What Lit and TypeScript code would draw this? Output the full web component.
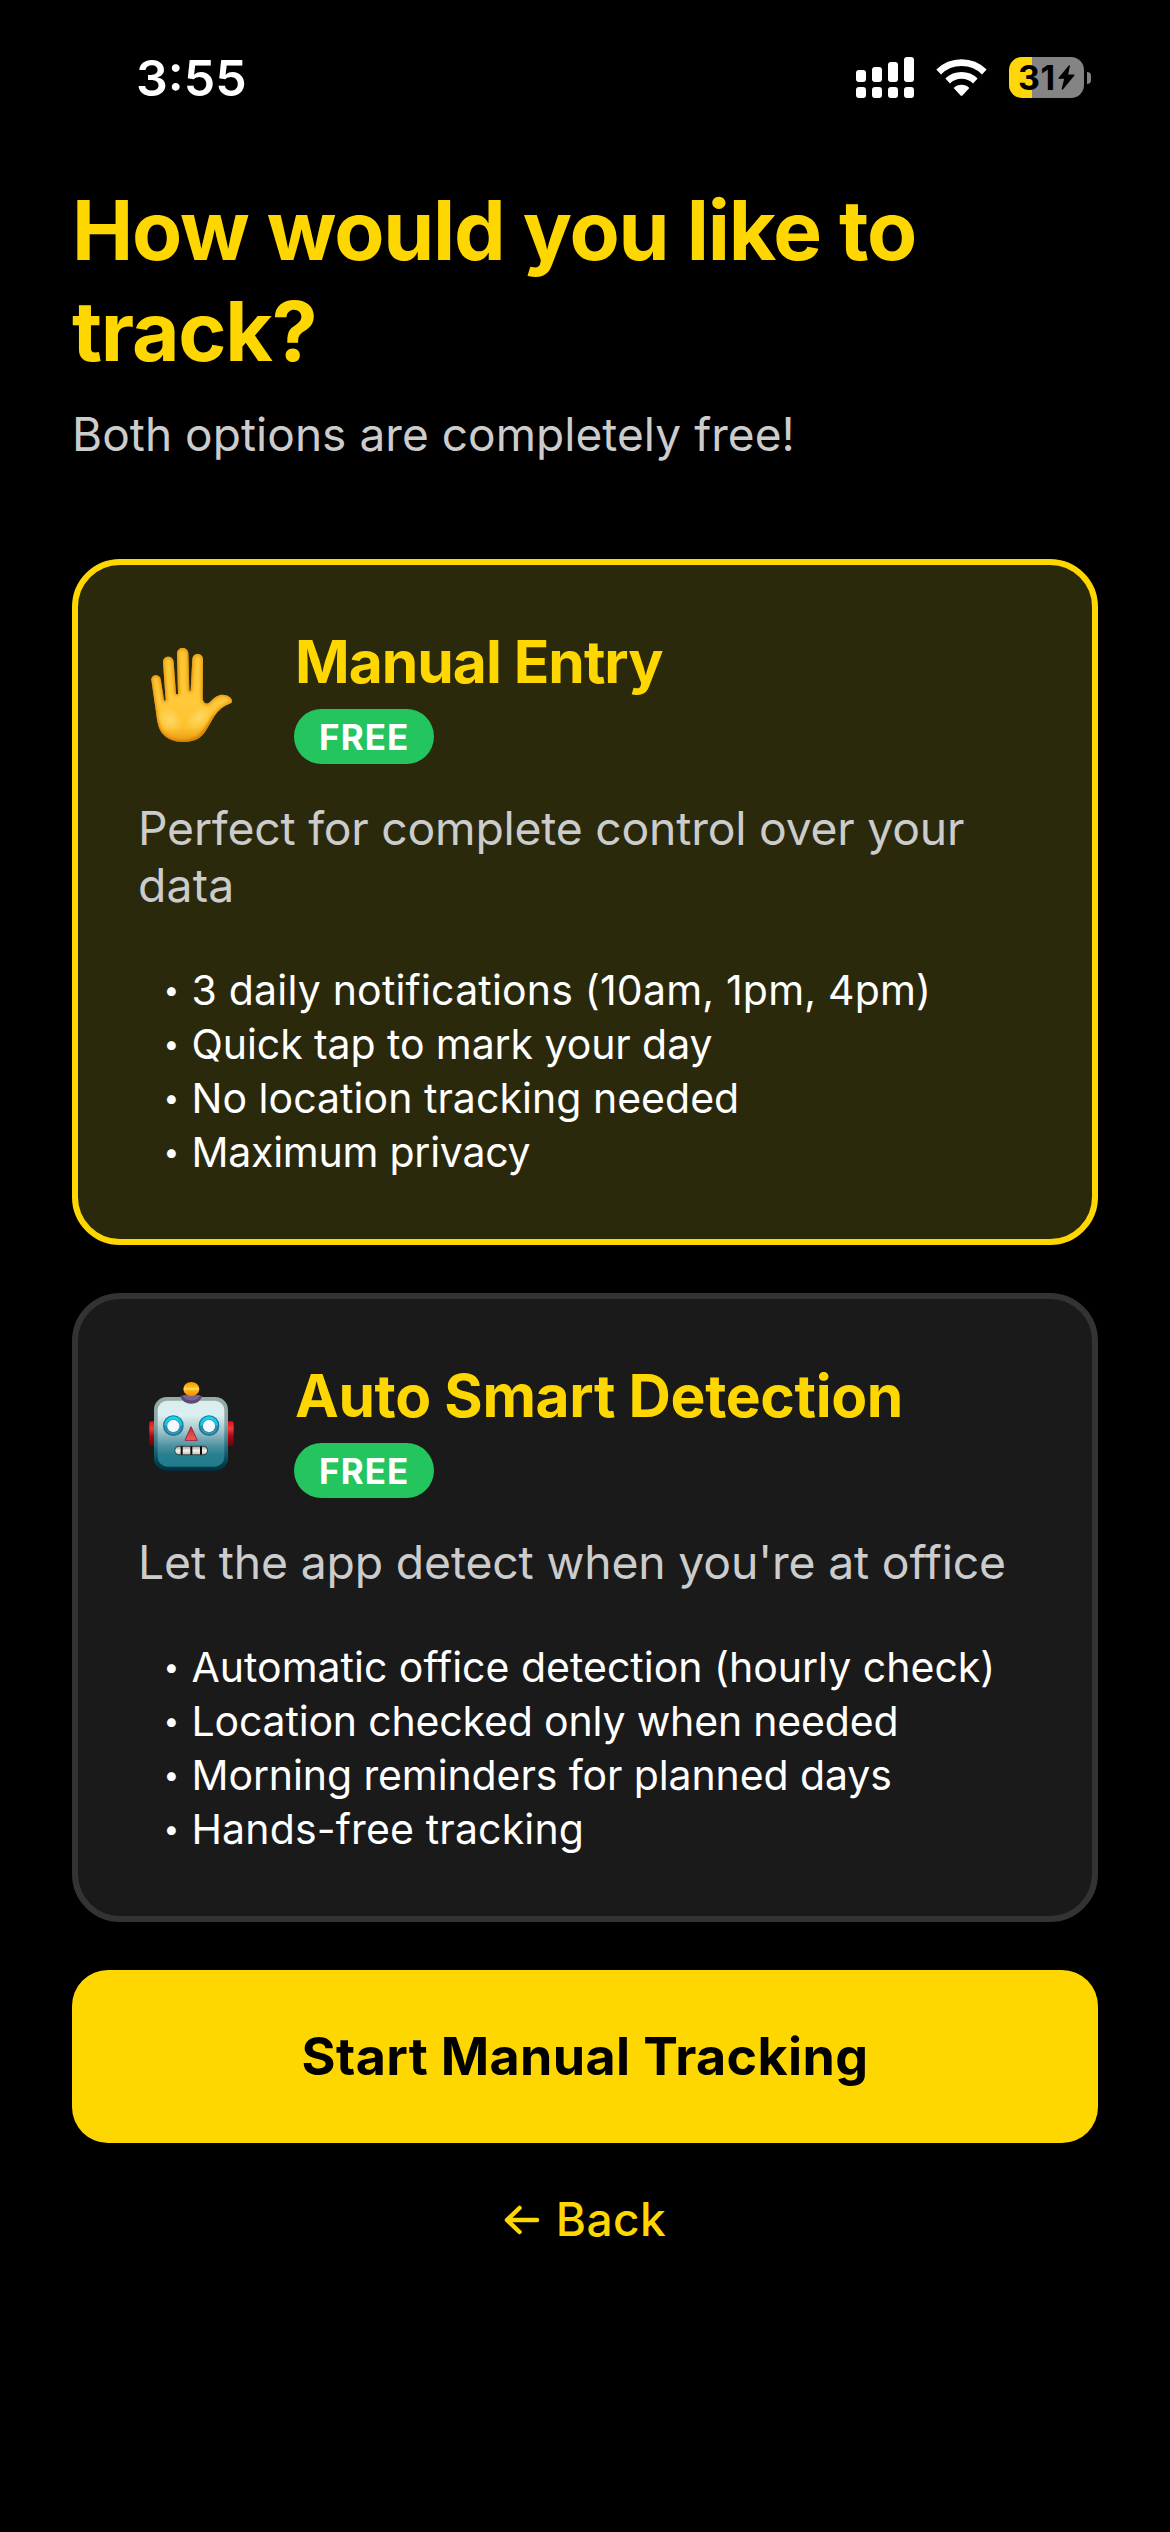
import { LitElement, html, css, svg, nothing, TemplateResult } from "lit";
import { customElement, property, state } from "lit/decorators.js";
import { classMap } from "lit/directives/class-map.js";

type Mode = "manual" | "auto";
type Line = { text: string; track: number };
type Option = { id: Mode; title: Line; lead: Line[]; points: Line[] };

const OPTIONS: Option[] = [
  {
    id: "manual",
    title: { text: "Manual Entry", track: -1 },
    lead: [
      { text: "Perfect for complete control over your", track: -0.215 },
      { text: "data", track: 0.2 },
    ],
    points: [
      { text: "3 daily notifications (10am, 1pm, 4pm)", track: 0.196 },
      { text: "Quick tap to mark your day", track: -0.08 },
      { text: "No location tracking needed", track: 0.034 },
      { text: "Maximum privacy", track: -0.25 },
    ],
  },
  {
    id: "auto",
    title: { text: "Auto Smart Detection", track: -0.368 },
    lead: [{ text: "Let the app detect when you're at office", track: -0.146 }],
    points: [
      { text: "Automatic office detection (hourly check)", track: 0 },
      { text: "Location checked only when needed", track: -0.169 },
      { text: "Morning reminders for planned days", track: -0.107 },
      { text: "Hands-free tracking", track: 0.154 },
    ],
  },
];

const HAND = "M94 180C93 161 120 161 122 178L132 240Q135 244 137 240L129 128C128 105 160 105 161 127L168 221Q171 225 174 221L171 101C171 78 205 78 205 101L208 211Q210 215 212 211L217 118C218 97 249 97 249 119L248 232C248 248 258 254 266 249C276 242 284 229 300 225C316 221 336 231 336 243C336 250 330 251 322 254C305 261 291 276 282 290C269 311 259 335 241 351C229 361 211 366 187 366C158 366 137 354 124 337C114 322 110 295 108 275Z";

const handIcon = html`
  <svg viewBox="54 15 324 417" aria-hidden="true">
    <defs>
      <linearGradient id="skin" x1="0" y1="0" x2="0" y2="1">
        <stop offset="0" stop-color="#ffc62f" /><stop offset=".6" stop-color="#ffc93a" />
        <stop offset=".85" stop-color="#fdc02c" /><stop offset="1" stop-color="#e89a10" />
      </linearGradient>
      <radialGradient id="sheen"><stop offset="0" stop-color="#ffdf7a" stop-opacity=".75" /><stop offset="1" stop-color="#ffdf7a" stop-opacity="0" /></radialGradient>
      <clipPath id="hand-clip"><path d=${HAND} /></clipPath>
      <filter id="soft" x="-20%" y="-20%" width="140%" height="140%"><feGaussianBlur stdDeviation="4" /></filter>
    </defs>
    <path d=${HAND} fill="url(#skin)" />
    <g clip-path="url(#hand-clip)">
      <path d=${HAND} fill="none" stroke="#d98200" stroke-width="9" opacity=".75" filter="url(#soft)" />
      <path d="M106 300C114 350 145 368 187 368C240 368 255 330 284 290" fill="none" stroke="#c06a00" stroke-width="9" opacity=".6" filter="url(#soft)" />
      <ellipse cx="150" cy="300" rx="42" ry="34" fill="url(#sheen)" transform="rotate(40 150 300)" />
      <ellipse cx="236" cy="294" rx="46" ry="28" fill="url(#sheen)" transform="rotate(-42 236 294)" />
    </g>
  </svg>`;

const eye = (cx: number) => svg`
  <circle cx=${cx} cy="197" r="31" fill="#1b7794"/>
  <circle cx=${cx} cy="196" r="27" fill="url(#iris)"/>
  <circle cx=${cx} cy="198" r="20" fill="#1d86a3"/>
  <circle cx=${cx} cy="198" r="18.5" fill="#f3f8fc"/>`;

const robotIcon = html`
  <svg viewBox="54 -3 324 417" aria-hidden="true">
    <defs>
      <linearGradient id="shell" x1="0" y1="0" x2="0" y2="1">
        <stop offset="0" stop-color="#98aaa5" /><stop offset=".35" stop-color="#86a8a9" />
        <stop offset=".65" stop-color="#2b7482" /><stop offset=".88" stop-color="#044558" /><stop offset="1" stop-color="#00303f" />
      </linearGradient>
      <linearGradient id="face" x1="0" y1="0" x2="0" y2="1">
        <stop offset="0" stop-color="#d9eeec" /><stop offset=".22" stop-color="#dceff1" />
        <stop offset=".45" stop-color="#a5c6cd" /><stop offset=".68" stop-color="#4f93a2" />
        <stop offset=".82" stop-color="#28808f" /><stop offset="1" stop-color="#207a8b" />
      </linearGradient>
      <linearGradient id="iris" x1="0" y1="0" x2="0" y2="1">
        <stop offset="0" stop-color="#0adcf8" /><stop offset=".48" stop-color="#18c4e6" /><stop offset=".56" stop-color="#2a8dab" /><stop offset="1" stop-color="#3f9cb4" />
      </linearGradient>
      <linearGradient id="ear" x1="0" y1="0" x2="0" y2="1">
        <stop offset="0" stop-color="#e00f12" /><stop offset=".3" stop-color="#ee3a38" /><stop offset=".6" stop-color="#a10a12" /><stop offset="1" stop-color="#720008" />
      </linearGradient>
      <linearGradient id="bulb" x1="0" y1="0" x2="0" y2="1">
        <stop offset="0" stop-color="#f59a00" /><stop offset=".35" stop-color="#ffb812" /><stop offset=".5" stop-color="#ffe680" /><stop offset=".62" stop-color="#ffb000" /><stop offset="1" stop-color="#ff8d00" />
      </linearGradient>
      <linearGradient id="nose" x1="0" y1="0" x2="0" y2="1"><stop offset="0" stop-color="#c32a38" /><stop offset="1" stop-color="#f0605e" /></linearGradient>
      <linearGradient id="teeth" x1="0" y1="0" x2="0" y2="1"><stop offset="0" stop-color="#a9a6a2" /><stop offset=".5" stop-color="#f4f2ee" /><stop offset="1" stop-color="#c9c6c1" /></linearGradient>
    </defs>
    <rect x="88" y="184" width="20" height="74" rx="5" fill="url(#ear)" />
    <rect x="321" y="184" width="20" height="74" rx="5" fill="url(#ear)" />
    <rect x="102" y="111" width="222" height="221" rx="38" fill="url(#shell)" />
    <rect x="113" y="122" width="200" height="198" rx="29" fill="url(#face)" />
    <path d="M181 108Q214 98 246 108C243 123 230 131 214 131S184 123 181 108Z" fill="#5d4a74" />
    <path d="M188 106H240C236 117 226 121 214 121S192 117 188 106Z" fill="#7a6492" />
    <ellipse cx="214" cy="87" rx="24" ry="21" fill="url(#bulb)" />
    ${eye(160)}${eye(267)}
    <path d="M213 200L195 241H232Z" fill="url(#nose)" stroke="#a32432" stroke-width="3" stroke-linejoin="round" />
    <rect x="163" y="257" width="101" height="29" rx="14.5" fill="#2a474c" />
    <rect x="166" y="260" width="95" height="23" rx="11.5" fill="url(#teeth)" />
    <path d="M185 259V284M214 259V284M243 259V284" stroke="#0d0b0a" stroke-width="6" />
  </svg>`;

const ICONS: Record<Mode, TemplateResult> = { manual: handIcon, auto: robotIcon };

@customElement("status-bar")
class StatusBar extends LitElement {
  static styles = css`
    :host { display: flex; justify-content: space-between; align-items: flex-start; height: 123px; padding: 57px 79px 0 136px; color: #fff; }
    .time { font-size: 50px; font-weight: 600; line-height: 43px; }
    .icons { display: flex; align-items: flex-start; height: 41px; }
    .signal { width: 58px; height: 41px; margin-right: 22px; }
    .wifi { width: 51px; height: 41px; margin-right: 22px; }
    .battery { display: flex; align-items: center; box-sizing: border-box; width: 75px; height: 41px; padding-left: 9px; border-radius: 13px; background: linear-gradient(90deg, #ffd60a 23px, #848484 23px); color: #000; }
    .level { font-size: 34px; font-weight: 700; line-height: 41px; letter-spacing: 0.6px; }
    .bolt { width: 17px; height: 25px; margin-left: 2px; }
    .nub { width: 4px; height: 12px; margin: 15px 0 0 3px; border-radius: 0 6px 6px 0; background: #848484; }
  `;
  render() {
    return html`
      <span class="time">3:55</span>
      <div class="icons">
        <svg class="signal" viewBox="78 51 174 123" fill="#fff" aria-hidden="true">
          ${[90, 81, 66, 51].map((y, i) => svg`
            <rect x=${78 + i * 48} y=${y} width="30" height=${126 - y} rx="9"/>
            <rect x=${78 + i * 48} y="141" width="30" height="33" rx="9"/>`)}
        </svg>
        <svg class="wifi" viewBox="318 51 153 123" aria-hidden="true">
          <g fill="none" stroke="#fff" stroke-width="20">
            <path d="M326 96A98 98 0 0 1 463 96" />
            <path d="M353 123A60 60 0 0 1 436 123" />
          </g>
          <path d="M371 144A34 34 0 0 1 418 144L398 166Q394.500 169 391 166Z" fill="#fff" />
        </svg>
        <div class="battery">
          <span class="level">31</span>
          <svg class="bolt" viewBox="688 78 51 76" aria-hidden="true"><path d="M722 81L691 118H709L701 151L736 109H716Z" fill="#000" stroke="#000" stroke-width="4" stroke-linejoin="round" /></svg>
        </div>
        <span class="nub"></span>
      </div>`;
  }
}

@customElement("option-card")
class OptionCard extends LitElement {
  @property({ attribute: false }) option!: Option;
  @property({ type: Boolean }) selected = false;
  static styles = css`
    :host { display: block; }
    .card { box-sizing: border-box; padding: 60px; border: 6px solid #333; border-radius: 48px; background: #1a1a1a; }
    .card.selected { border-color: #ffd700; background: #2b290c; }
    .head { display: flex; height: 139px; gap: 48px; margin-bottom: 36px; }
    .head svg { width: 108px; height: 139px; }
    .names { display: flex; flex-direction: column; align-items: flex-start; gap: 11px; }
    .title { margin: 0; padding-left: 1px; font-size: 58.7px; font-weight: 700; line-height: 73px; color: #ffd700; }
    .badge { box-sizing: border-box; width: 140px; height: 55px; padding-left: 25px; border-radius: 28px; background: #24c55e; color: #fff; font-size: 35px; font-weight: 700; line-height: 56px; letter-spacing: 1.1px; }
    .lead { margin: 0 0 49px; color: #ccc; font-size: 46.3px; line-height: 57px; white-space: nowrap; }
    .lead span { display: block; }
    .points { margin: 0; padding: 0 0 0 25.500px; list-style: none; color: #fff; font-size: 41px; line-height: 54px; }
    .points li { display: flex; height: 54px; white-space: nowrap; }
    .dot { width: 28px; font-size: 28px; line-height: 55px; }
  `;
  render() {
    const { id, title, lead, points } = this.option;
    return html`
      <section class=${classMap({ card: true, selected: this.selected })}>
        <div class="head">
          ${ICONS[id]}
          <div class="names">
            <h2 class="title" style="letter-spacing:${title.track}px">${title.text}</h2>
            <span class="badge">FREE</span>
          </div>
        </div>
        <p class="lead">${lead.map((l) => html`<span style="letter-spacing:${l.track}px">${l.text}</span>`)}</p>
        <ul class="points">
          ${points.map((p) => html`<li><span class="dot">•</span><span style="letter-spacing:${p.track}px">${p.text}</span></li>`)}
        </ul>
      </section>`;
  }
}

@customElement("app-root")
class AppRoot extends LitElement {
  @state() private mode: Mode = "manual";
  static styles = css`
    :host { display: block; box-sizing: border-box; min-height: 2532px; background: #000; font-family: Inter, "Liberation Sans", sans-serif; }
    main { display: flex; flex-direction: column; padding: 0 72px; }
    h1 { margin: 0 0 24px; color: #ffd700; font-size: 82px; font-weight: 700; line-height: 101px; letter-spacing: -1.2px; }
    .sub { margin: 0 0 96px; color: #ccc; font-size: 46px; line-height: 57px; letter-spacing: 0.05px; }
    .options { display: flex; flex-direction: column; gap: 48px; }
    button { border: 0; padding: 0; background: none; font-family: inherit; cursor: pointer; }
    .start { height: 173px; margin-top: 48px; border-radius: 36px; background: #ffd700; color: #000; font-size: 52px; font-weight: 700; line-height: 173px; letter-spacing: 0.345px; }
    .back { display: flex; align-self: center; align-items: center; gap: 16px; height: 57px; margin-top: 48px; color: #ffd700; font-size: 46px; font-weight: 500; line-height: 57px; letter-spacing: 0.5px; }
    .back svg { width: 36px; height: 30px; }
  `;
  render() {
    return html`
      <status-bar></status-bar>
      <main>
        <h1>How would you like to<br />track?</h1>
        <p class="sub">Both options are completely free!</p>
        <div class="options">
          ${OPTIONS.map((o) => html`<option-card .option=${o} ?selected=${o.id === this.mode} @click=${() => (this.mode = o.id)}></option-card>`)}
        </div>
        <button class="start">${this.mode === "manual" ? "Start Manual Tracking" : "Start Auto Tracking"}</button>
        <button class="back">
          <svg viewBox="0 0 36 30" fill="none" stroke="#ffd700" stroke-width="4.500" stroke-linecap="round" stroke-linejoin="round" aria-hidden="true"><path d="M3 15H33M15.500 3L3 15L15.500 27" /></svg>
          <span>Back</span>
        </button>
      </main>`;
  }
}
